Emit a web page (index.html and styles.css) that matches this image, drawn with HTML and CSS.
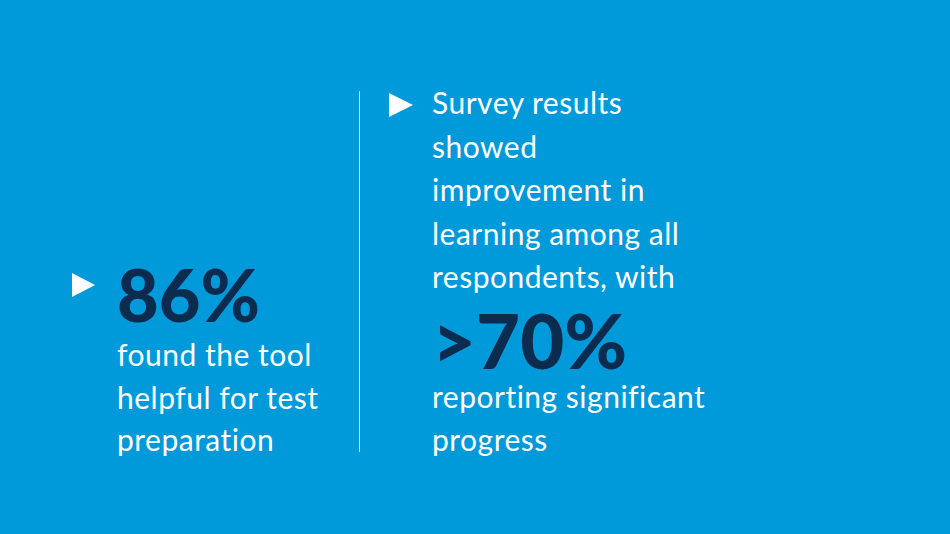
FILE: index.html
```html
<!DOCTYPE html>
<html lang="en">
<head>
<meta charset="utf-8">
<title>Survey stats</title>
<link rel="stylesheet" href="styles.css">
</head>
<body>
<main class="slide">
  <section class="stat stat-left">
    <span class="arrow"></span>
    <div class="stat-body">
      <div class="big big-left">86%</div>
      <p class="text text-after">found the tool<br>helpful for test<br>preparation</p>
    </div>
  </section>
  <div class="divider"></div>
  <section class="stat stat-right">
    <span class="arrow"></span>
    <div class="stat-body">
      <p class="text text-lead">Survey results<br>showed<br>improvement in<br>learning among all<br>respondents, with</p>
      <div class="big big-right">&gt;70%</div>
      <p class="text text-after text-after-right">reporting significant<br>progress</p>
    </div>
  </section>
</main>
</body>
</html>
```
FILE: styles.css
```css
html, body {
  margin: 0;
  padding: 0;
}
body {
  width: 950px;
  height: 534px;
  background: #0099d9;
  font-family: Lato, "Open Sans", "Liberation Sans", sans-serif;
  color: #ffffff;
  overflow: hidden;
  font-variant-ligatures: none;
}
.slide {
  display: flex;
  align-items: flex-start;
  height: 534px;
  padding-left: 72px;
  box-sizing: border-box;
}
.stat {
  display: flex;
  flex: none;
}
.stat-left {
  width: 287px;
  margin-top: 260px;
  gap: 22px;
}
.stat-right {
  margin-left: 29px;
  margin-top: 81px;
  gap: 19px;
}
.arrow {
  flex: none;
  width: 0;
  height: 0;
  margin-top: 13px;
  border-top: 12.5px solid transparent;
  border-bottom: 12.5px solid transparent;
  border-left: 23px solid #ffffff;
}
.stat-right .arrow {
  border-left-width: 24px;
  margin-top: 12px;
}
.divider {
  flex: none;
  width: 1px;
  height: 361px;
  margin-top: 91px;
  background: rgba(255, 255, 255, 0.75);
}
.text {
  margin: 0;
  font-size: 30px;
  font-weight: 400;
  letter-spacing: 0.5px;
  white-space: nowrap;
}
.text-lead {
  line-height: 43.5px;
}
.text-after {
  line-height: 42.5px;
  margin-top: 5px;
}
.text-after-right {
  line-height: 43px;
  margin-top: 1px;
}
.big {
  font-weight: 900;
  color: #0b2b4f;
  line-height: 68px;
  white-space: nowrap;
}
.big-left {
  font-size: 72px;
}
.big-right {
  font-size: 76px;
  margin-top: 7px;
}
```
